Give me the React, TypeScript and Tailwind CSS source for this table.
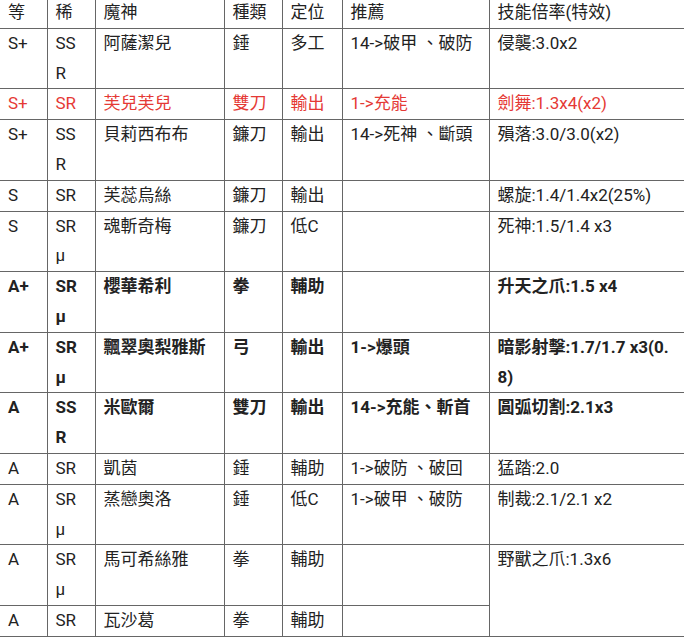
// Tier table of 魔神 — plain bordered table, no outer left/right edge.

type Row = {
  tier: string;
  rarity: React.ReactNode;
  name: string;
  kind: string;
  role: string;
  rec: string;
  skill?: React.ReactNode;
  skillSpan?: number;
  tone?: 'red' | 'bold';
};

const rows: Row[] = [
  { tier: 'S+', rarity: <>SS<br />R</>, name: '阿薩潔兒', kind: '錘', role: '多工', rec: '14->破甲 、破防', skill: '侵襲:3.0x2' },
  { tier: 'S+', rarity: 'SR', name: '芙兒芙兒', kind: '雙刀', role: '輸出', rec: '1->充能', skill: '劍舞:1.3x4(x2)', tone: 'red' },
  { tier: 'S+', rarity: <>SS<br />R</>, name: '貝莉西布布', kind: '鐮刀', role: '輸出', rec: '14->死神 、斷頭', skill: '殞落:3.0/3.0(x2)' },
  { tier: 'S', rarity: 'SR', name: '芙蕊烏絲', kind: '鐮刀', role: '輸出', rec: '', skill: '螺旋:1.4/1.4x2(25%)' },
  { tier: 'S', rarity: <>SR<br />μ</>, name: '魂斬奇梅', kind: '鐮刀', role: '低C', rec: '', skill: '死神:1.5/1.4 x3' },
  { tier: 'A+', rarity: <>SR<br />μ</>, name: '櫻華希利', kind: '拳', role: '輔助', rec: '', skill: '升天之爪:1.5 x4', tone: 'bold' },
  { tier: 'A+', rarity: <>SR<br />μ</>, name: '飄翠奧梨雅斯', kind: '弓', role: '輸出', rec: '1->爆頭', skill: <>暗影射擊:1.7/1.7 x3(0.<br />8)</>, tone: 'bold' },
  { tier: 'A', rarity: <>SS<br />R</>, name: '米歐爾', kind: '雙刀', role: '輸出', rec: '14->充能、斬首', skill: '圓弧切割:2.1x3', tone: 'bold' },
  { tier: 'A', rarity: 'SR', name: '凱茵', kind: '錘', role: '輔助', rec: '1->破防 、破回', skill: '猛踏:2.0' },
  { tier: 'A', rarity: <>SR<br />μ</>, name: '蒸戀奧洛', kind: '錘', role: '低C', rec: '1->破甲 、破防', skill: '制裁:2.1/2.1 x2' },
  { tier: 'A', rarity: <>SR<br />μ</>, name: '馬可希絲雅', kind: '拳', role: '輔助', rec: '', skill: '野獸之爪:1.3x6', skillSpan: 2 },
  { tier: 'A', rarity: 'SR', name: '瓦沙葛', kind: '拳', role: '輔助', rec: '' },
];

const cell = 'border border-[#666] px-2 align-top';

export default function App() {
  return (
    <div
      className="w-[687px] h-[638px] overflow-hidden bg-white text-[#222] text-[17px] leading-[29.8px]"
      style={{ fontFamily: 'Roboto, "Noto Sans CJK TC", sans-serif' }}
    >
      <table className="-mt-[3px] w-[684px] table-fixed border-collapse [&_tr>*:first-child]:border-l-0 [&_tr>*:last-child]:border-r-0">
        <colgroup>
          <col className="w-[47px]" />
          <col className="w-[48px]" />
          <col className="w-[129px]" />
          <col className="w-[58px]" />
          <col className="w-[60px]" />
          <col className="w-[147px]" />
          <col className="w-[195px]" />
        </colgroup>
        <thead>
          <tr>
            {['等', '稀', '魔神', '種類', '定位', '推薦', '技能倍率(特效)'].map((h) => (
              <th key={h} className={`${cell} text-left font-normal`}>
                {h}
              </th>
            ))}
          </tr>
        </thead>
        <tbody>
          {rows.map((r, i) => {
            const tone = r.tone === 'red' ? 'text-[#e53935]' : r.tone === 'bold' ? 'font-bold' : '';
            return (
              <tr key={i} className={tone}>
                <td className={cell}>{r.tier}</td>
                <td className={cell}>{r.rarity}</td>
                <td className={cell}>{r.name}</td>
                <td className={cell}>{r.kind}</td>
                <td className={cell}>{r.role}</td>
                <td className={cell}>{r.rec}</td>
                {r.skill !== undefined && (
                  <td className={`${cell} !border-r-0`} rowSpan={r.skillSpan}>
                    {r.skill}
                  </td>
                )}
              </tr>
            );
          })}
        </tbody>
      </table>
    </div>
  );
}
